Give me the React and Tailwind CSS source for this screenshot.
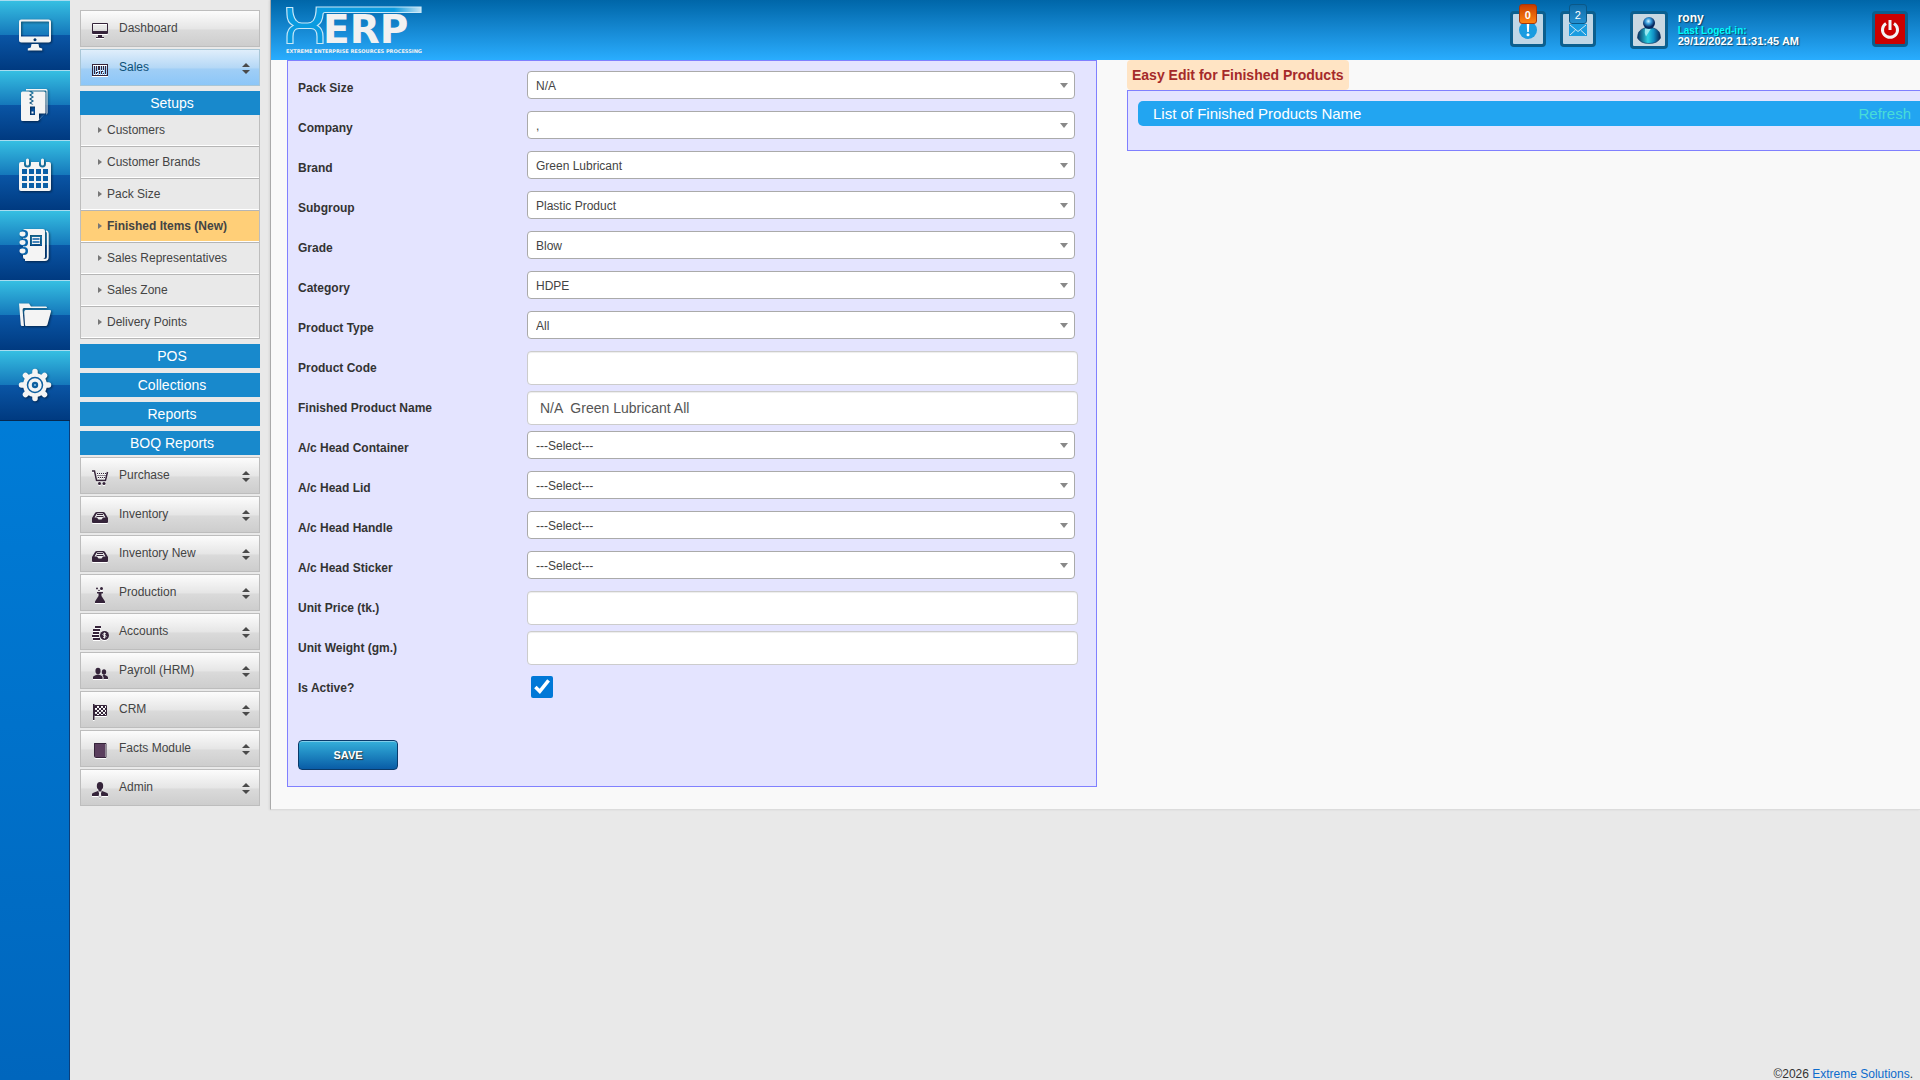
import React, { useState } from "react";

/* ---------- large white icons of the left rail ---------- */

function MonitorIcon() {
  return (
    <svg viewBox="0 0 34 34" className="size-[34px] drop-shadow-[1px_1px_1px_rgba(0,0,0,0.5)]" fill="#f4f4f4">
      <path fillRule="evenodd" d="M3.500 1.500h27a2.500 2.500 0 0 1 2.500 2.500v18a2.500 2.500 0 0 1-2.500 2.500h-27a2.500 2.500 0 0 1-2.500-2.500v-18a2.500 2.500 0 0 1 2.500-2.500zM3 4v14.500h28V4a.5.5 0 0 0-.5-.5h-27a.5.500 0 0 0-.5.500zM17 20.300a1.500 1.500 0 1 0 .01 0z" />
      <path d="M13.500 26h7l.7 3.500 3 1v2h-14.400v-2l3-1z" />
    </svg>
  );
}

function ArchiveIcon() {
  return (
    <svg viewBox="0 0 34 34" className="size-[34px] drop-shadow-[1px_1px_1px_rgba(0,0,0,0.5)]" fill="#f4f4f4">
      <path d="M8 1h20q1.500 0 1.500 1.500V25l-1 2V3.500q0-1-1-1H8z" />
      <path
        fillRule="evenodd"
        d="M5.500 3.500h5.500l3 1.500-3 2 3 2-3 2 3 2-3 2 3 1.500h1.500l-2.500-1.500 3-2-3-2 3-2-3-2 3-2-2-1.500h12q1.500 0 1.500 1.500V25l-7.500 8h-15.500q-1.500 0-1.500-1.500v-26.500q0-1.500 1.500-1.500zM12 18.500v8.500h5v-8.500zM13.500 23.500h2v2h-2zM21 31.500v-6h6z"
      />
    </svg>
  );
}

function CalendarIcon() {
  return (
    <svg viewBox="0 0 34 34" className="size-[34px] drop-shadow-[1px_1px_1px_rgba(0,0,0,0.5)]">
      <path fill="#f4f4f4" d="M3 4h3v2a3.500 3.500 0 0 0 7 0V4h8v2a3.500 3.500 0 0 0 7 0V4h3q2 0 2 2v25q0 2-2 2H3q-2 0-2-2V6q0-2 2-2z" />
      <path stroke="#f4f4f4" strokeWidth="3" strokeLinecap="round" d="M9.500 2v4M24.500 2v4" />
      <g fill="#0b5fa6">
        {[11, 18, 25].map((y) =>
          [4, 11, 18, 25].map((x) => <rect key={`${x}-${y}`} x={x} y={y} width="5" height="5" />)
        )}
      </g>
    </svg>
  );
}

function NotebookIcon() {
  return (
    <svg viewBox="0 0 34 34" className="size-[34px] drop-shadow-[1px_1px_1px_rgba(0,0,0,0.5)]">
      <path
        fill="#f4f4f4"
        fillRule="evenodd"
        d="M7 1h18q2 0 2 2v26q0 2-2 2H7q-2 0-2-2V3q0-2 2-2zM12 7v11h12V7zM14 9h8v7h-8z"
      />
      <path fill="none" stroke="#f4f4f4" strokeWidth="1.800" d="M28 3q1.800.5 1.800 2.500v23.500q0 3-3 3H7" />
      <path stroke="#0b5fa6" strokeWidth="1.500" d="M14.500 11h7M14.500 14h7" />
      {[6, 14.5, 23].map((y) => (
        <g key={y}>
          <circle cx="6" cy={y} r="4" fill="#0b65ab" />
          <ellipse cx="4.500" cy={y} rx="3" ry="2.400" fill="#f4f4f4" />
        </g>
      ))}
    </svg>
  );
}

function FolderIcon() {
  return (
    <svg viewBox="0 0 34 34" className="size-[34px] drop-shadow-[1px_1px_1px_rgba(0,0,0,0.5)]" fill="#f4f4f4">
      <path d="M1 5.500h10l2 3h15q1 0 1 1.500H6q-1.500 0-1.400 2L6 28H4q-1 0-1.200-1z" />
      <path d="M7.500 12H32q1.500 0 1 1.500l-3.500 13q-.5 1.500-2 1.500H8q-1 0-1-1l-.8-13q0-1.500 1.300-2z" />
    </svg>
  );
}

function GearIcon() {
  return (
    <svg viewBox="0 0 34 34" className="size-[34px] drop-shadow-[1px_1px_1px_rgba(0,0,0,0.5)]">
      <g stroke="#f4f4f4" strokeWidth="5.500" strokeLinecap="round">
        <path d="M17 3.500v27M3.500 17h27M7.500 7.500l19 19M26.500 7.500l-19 19" />
      </g>
      <circle cx="17" cy="17" r="12" fill="#f4f4f4" />
      <circle cx="17" cy="17" r="7.500" fill="none" stroke="#0e5f9f" strokeWidth="1.500" />
      <circle cx="17" cy="17" r="3.200" fill="#0e5f9f" />
      <circle cx="17" cy="17" r="1" fill="#8fc0e4" />
    </svg>
  );
}

/* ---------- small dark icons of the module menu ---------- */

const menuIcons = {
  dashboard: (
    <path fillRule="evenodd" d="M1 0h14q1 0 1 1v9q0 1-1 1H1q-1 0-1-1V1q0-1 1-1zM1 1v7h14V1zM6 12h4v2h2v1H4v-1h2z" />
  ),
  sales: (
    <>
      <path fillRule="evenodd" d="M0 2h16v12H0zM1 3v10h14V3z" />
      <path d="M2 4h1v8H2zM4 4h1v5H4zM6 4h2v4H6zM9 4h1v4H9zM11 4h1v4h-1zM13 4h1v8h-1zM4 10h2v1H5v1H4zM7 9h1v3H7zM9 9h2v1h-1v2H9zM11 11h1v1h-1z" />
    </>
  ),
  purchase: (
    <>
      <path fill="none" stroke="#35243a" strokeWidth="1.500" d="M0 1h2.500l2 9.500h9L15.500 2" />
      <path fill="none" stroke="#35243a" strokeWidth="1" strokeDasharray="1 1" d="M5 3.500h9M5.500 5.500h8.500M6 7.500h7.500" />
      <circle cx="7.500" cy="13.500" r="1.500" />
      <circle cx="12" cy="13.500" r="1.500" />
    </>
  ),
  inventory: (
    <>
      <path d="M0 9l3-5q.5-1 2-1h6q1.500 0 2 1l3 5v4q0 1-1 1H1q-1 0-1-1z" />
      <path fill="#eee" d="M2.500 8.500L4.500 5q.4-.8 1.300-.8h4.400q.9 0 1.300.8l2 3.500H11L9.500 10.500h-3L5 8.500z" />
      <path stroke="#35243a" d="M5 5.500h6M4.500 7.500h7" />
    </>
  ),
  production: (
    <>
      <path d="M5 5h6v1.500H9.500V9L13 14.500V16H3v-1.500L6.500 9V6.500H5z" />
      <circle cx="9.500" cy="1.500" r="1.500" />
      <circle cx="5" cy="1.500" r="1" />
      <circle cx="7" cy="3.500" r=".8" />
    </>
  ),
  accounts: (
    <>
      <path d="M3 0h6v2H3zM1 3h7v2H1zM1 6h6v2H1zM0 9h7v2H0zM1 12h7v2H1z" />
      <circle cx="12.500" cy="9.500" r="4.500" />
      <path fill="none" stroke="#eee" strokeWidth="1" d="M14 7.800q-3-1-3 .5t1.500 1.200 1.500 1-3 .8M12.500 6.500v6" />
    </>
  ),
  payroll: (
    <>
      <ellipse cx="6" cy="6" rx="2.600" ry="3.200" />
      <path d="M1 14v-2q0-1 2-1.500L5 9.500h2l2 1q1.500.5 1.500 1.500v2z" />
      <ellipse cx="12" cy="7" rx="2.200" ry="2.800" />
      <path d="M11.500 14v-2l-1-1.500 1-.5h1.500l2 1q1 .5 1 1.500V14z" />
    </>
  ),
  crm: (
    <>
      <path d="M1 0h1.500v16H1z" />
      <path fill="none" stroke="#35243a" d="M2.500 1.500h12v10h-12z" />
      {[2, 4, 6, 8, 10].map((y, i) =>
        [3, 7, 11].map((x) => <rect key={`${x}-${y}`} x={x + (i % 2) * 2} y={y} width="2" height="2" />)
      )}
    </>
  ),
  facts: (
    <>
      <path fill="#5b3f5e" d="M2 0h11v14H3q-1 0-1-1z" />
      <path fill="none" stroke="#35243a" d="M2.500 13V.5h11.500v14H3.500q-1 0-1-1" />
    </>
  ),
  admin: (
    <>
      <ellipse cx="8" cy="4" rx="3.200" ry="4" />
      <path d="M6.500 7h3v2.500h-3zM0 14v-2q0-1 2-1.500l4-1.500 2 4 2-4 4 1.500q2 .5 2 1.500v2H9.500L8 16l-1.500-2z" />
      <path fill="#eee" d="M7.300 10h1.400L9.300 14 8 15.500 6.700 14z" />
    </>
  ),
};

function MenuIcon({ name }) {
  return (
    <svg viewBox="0 0 16 16" className="mt-1 size-4 shrink-0 overflow-visible drop-shadow-[0_1px_0_#fff]" fill="#35243a">
      {menuIcons[name]}
    </svg>
  );
}

function SortArrows() {
  return (
    <svg viewBox="0 0 8 11" className="ml-auto mt-[2px] h-[11px] w-2" fill="#4a4a4a">
      <path d="M4 0l4 4H0zM4 11l4-4H0z" />
    </svg>
  );
}

/* ---------- data ---------- */

const railItems = [
  { label: "Desktop", Icon: MonitorIcon },
  { label: "Archive", Icon: ArchiveIcon },
  { label: "Calendar", Icon: CalendarIcon },
  { label: "Notebook", Icon: NotebookIcon },
  { label: "Files", Icon: FolderIcon },
  { label: "Settings", Icon: GearIcon },
];

const setupLinks = [
  "Customers",
  "Customer Brands",
  "Pack Size",
  "Finished Items (New)",
  "Sales Representatives",
  "Sales Zone",
  "Delivery Points",
];

const salesSections = ["POS", "Collections", "Reports", "BOQ Reports"];

const modules = [
  { label: "Purchase", icon: "purchase" },
  { label: "Inventory", icon: "inventory" },
  { label: "Inventory New", icon: "inventory" },
  { label: "Production", icon: "production" },
  { label: "Accounts", icon: "accounts" },
  { label: "Payroll (HRM)", icon: "payroll" },
  { label: "CRM", icon: "crm" },
  { label: "Facts Module", icon: "facts" },
  { label: "Admin", icon: "admin" },
];

const fields = [
  { id: "packSize", label: "Pack Size", type: "select", value: "N/A" },
  { id: "company", label: "Company", type: "select", value: "," },
  { id: "brand", label: "Brand", type: "select", value: "Green Lubricant" },
  { id: "subgroup", label: "Subgroup", type: "select", value: "Plastic Product" },
  { id: "grade", label: "Grade", type: "select", value: "Blow" },
  { id: "category", label: "Category", type: "select", value: "HDPE" },
  { id: "productType", label: "Product Type", type: "select", value: "All" },
  { id: "productCode", label: "Product Code", type: "text", value: "" },
  { id: "productName", label: "Finished Product Name", type: "text", value: "N/A  Green Lubricant All" },
  { id: "headContainer", label: "A/c Head Container", type: "select", value: "---Select---" },
  { id: "headLid", label: "A/c Head Lid", type: "select", value: "---Select---" },
  { id: "headHandle", label: "A/c Head Handle", type: "select", value: "---Select---" },
  { id: "headSticker", label: "A/c Head Sticker", type: "select", value: "---Select---" },
  { id: "unitPrice", label: "Unit Price (tk.)", type: "text", value: "" },
  { id: "unitWeight", label: "Unit Weight (gm.)", type: "text", value: "" },
  { id: "isActive", label: "Is Active?", type: "checkbox", value: true },
];

/* ---------- sidebar ---------- */

function IconRail() {
  return (
    <nav className="w-[70px] shrink-0 border-r border-[#0a3f7c] bg-linear-to-b from-[#008be8] to-[#0066bd]">
      <div className="-mr-px border-b border-[#06284f]">
        {railItems.map(({ label, Icon }) => (
          <button
            key={label}
            type="button"
            aria-label={label}
            className="flex h-[70px] w-full items-center justify-center border-t border-[#a9dcf0] bg-[linear-gradient(to_bottom,#36bfe2_0%,#1578bb_49%,#0a55a5_50%,#003a80_100%)] pb-[2px]"
          >
            <Icon />
          </button>
        ))}
      </div>
    </nav>
  );
}

function ModuleButton({ label, icon, active, arrows = true }) {
  return (
    <button
      type="button"
      className={`flex h-[37px] w-full items-center border pl-[11px] pr-[9px] text-xs ${
        active
          ? "border-[#a9c6d6] bg-[linear-gradient(to_bottom,#e0eefb_0%,#b5d8f6_50%,#a0cef6_55%,#8cc6f8_100%)] text-[#0d5077]"
          : "border-[#bdbdbd] bg-[linear-gradient(to_bottom,#fcfcfc_0%,#e6e6e6_50%,#dadada_55%,#cdcdcd_100%)] text-[#444]"
      }`}
    >
      <MenuIcon name={icon} />
      <span className="-mt-px ml-[11px]">{label}</span>
      {arrows && <SortArrows />}
    </button>
  );
}

function SectionTitle({ children }) {
  return (
    <button type="button" className="block h-6 w-full bg-[#1889cc] pl-1 text-center text-sm leading-6 text-white">
      {children}
    </button>
  );
}

function Sidebar() {
  return (
    <aside className="w-[200px] shrink-0 px-[10px] pt-[10px]">
      <div className="flex flex-col gap-[2px]">
        <ModuleButton label="Dashboard" icon="dashboard" arrows={false} />
        <ModuleButton label="Sales" icon="sales" active />
      </div>
      <div className="mb-[2px] mt-[5px] flex flex-col gap-[5px]">
        <div>
          <SectionTitle>Setups</SectionTitle>
          <ul className="border-x border-[#bdbdbd]">
            {setupLinks.map((link) => (
              <li key={link} className="border-b border-[#b5b5b5]">
                <a
                  href="#"
                  className={`flex h-[31px] items-center gap-[5px] border-b border-white pl-[17px] text-xs text-[#444] ${
                    link === "Finished Items (New)" ? "bg-[#ffcf78] font-bold" : "bg-[#e9e9e9]"
                  }`}
                >
                  <svg viewBox="0 0 4 6" className="h-[6px] w-1" fill="#777">
                    <path d="M0 0l4 3-4 3z" />
                  </svg>
                  {link}
                </a>
              </li>
            ))}
          </ul>
        </div>
        {salesSections.map((s) => (
          <SectionTitle key={s}>{s}</SectionTitle>
        ))}
      </div>
      <div className="flex flex-col gap-[2px]">
        {modules.map((m) => (
          <ModuleButton key={m.label} {...m} />
        ))}
      </div>
    </aside>
  );
}

/* ---------- header ---------- */

function Logo() {
  return (
    <svg viewBox="0 0 144 60" className="h-[60px] w-36" role="img" aria-label="XERP">
      <defs>
        <linearGradient id="tail" x1="0" x2="1">
          <stop offset="0.800" stopColor="#0a9be0" />
          <stop offset="1" stopColor="#c4e2f2" />
        </linearGradient>
      </defs>
      <path
        d="M.7 7.500h6q0 9 3.500 13 2 2.500 5.500 2.500h6q3.500 0 5.500-2.500 3-4 3-13.500H135v5.500H39q-2 0-2 2-.5 8-5.500 11 5.500 3 5.500 11v7h-6v-7q0-8-6-8h-12q-6 0-6 8v7h-6v-7q0-8 6-11-6-3-6-11z"
        fill="url(#tail)"
        stroke="#c9e8f8"
        strokeWidth="1.200"
      />
      <text x="37" y="43" fill="#f1f1f1" fontSize="39" fontWeight="700" fontFamily="DejaVu Sans, sans-serif">
        ERP
      </text>
      <text x="0" y="53" fill="#f1f1f1" fontSize="5" fontWeight="700" fontFamily="DejaVu Sans, sans-serif">
        EXTREME ENTERPRISE RESOURCES PROCESSING
      </text>
    </svg>
  );
}

function Badge({ children, className }) {
  return (
    <span
      className={`absolute -top-[10px] left-[6px] h-5 w-[18px] rounded-[3px] border text-center text-[11px] leading-[20px] text-white ${className}`}
    >
      {children}
    </span>
  );
}

function Header() {
  return (
    <header className="flex h-[60px] items-start bg-linear-to-b from-[#0066a8] to-[#29adff] pl-[15px] pr-3">
      <a href="#" className="block">
        <Logo />
      </a>
      <div className="ml-auto flex items-start pt-[11px]">
        <button
          type="button"
          aria-label="Alerts"
          className="relative mr-[14px] flex size-9 items-end justify-center rounded-[4px] border-[3px] border-[#0b5f8f] bg-[#bfd6e6] pb-[5px]"
        >
          <svg viewBox="0 0 18 18" className="size-[18px]">
            <circle cx="9" cy="9" r="9" fill="#1a9ce0" />
            <path fill="#fff" d="M7.700 2.500h2.600l-.5 8.500H8.200z" />
            <circle cx="9" cy="13.800" r="1.500" fill="#fff" />
          </svg>
          <Badge className="border-[#a83808] bg-linear-to-b from-[#c93c00] to-[#ff8412] font-bold">0</Badge>
        </button>
        <button
          type="button"
          aria-label="Messages"
          className="relative mr-[34px] flex size-9 items-end justify-center rounded-[4px] border-[3px] border-[#0b5f8f] bg-[#bfd6e6] pb-2"
        >
          <svg viewBox="0 0 18 12" className="h-3 w-[18px]">
            <path fill="#1a9ce0" d="M0 0h18v12H0z" />
            <path fill="none" stroke="#cfe6f4" d="M1 1l8 6.500L17 1M1 11l5.500-5M17 11l-5.500-5" />
          </svg>
          <Badge className="border-[#0a5888] bg-linear-to-b from-[#0d6ba8] to-[#2590d0]">2</Badge>
        </button>
        <div className="flex size-[38px] items-center justify-center rounded-[4px] border-[3px] border-[#0b5f8f] bg-[#c9d8e2]">
          <svg viewBox="0 0 30 30" className="size-[30px]">
            <defs>
              <linearGradient id="body" x1="0" x2="1">
                <stop offset="0" stopColor="#08305f" />
                <stop offset="0.450" stopColor="#2bd0e2" />
                <stop offset="0.700" stopColor="#108fc4" />
                <stop offset="1" stopColor="#072050" />
              </linearGradient>
              <radialGradient id="head" cx="0.450" cy="0.350">
                <stop offset="0" stopColor="#d8f4ff" />
                <stop offset="0.450" stopColor="#3a9fe0" />
                <stop offset="1" stopColor="#08285e" />
              </radialGradient>
            </defs>
            <path fill="url(#body)" stroke="#0a2a5a" strokeWidth=".6" d="M3.500 23q0-8 7-10h9q7 2 7 10-3 5.500-11.500 5.500T3.500 23z" />
            <path fill="#b5f2f8" opacity=".8" d="M11 13.500h6l-5 8q-2-4-1-8z" />
            <circle cx="15" cy="8" r="6" fill="url(#head)" />
          </svg>
        </div>
        <div className="ml-[10px] mr-[73px] font-bold text-white text-shadow-[1px_1px_1px_rgba(0,0,0,0.5)]">
          <p className="text-xs leading-[14px]">rony</p>
          <p className="text-[10px] leading-[11px] text-[#00fcfc]">Last Loged-in:</p>
          <p className="text-[11px] leading-[11px]">29/12/2022 11:31:45 AM</p>
        </div>
        <button
          type="button"
          aria-label="Log out"
          className="flex size-9 items-center justify-center rounded-[4px] border-[3px] border-[#0b5f8f] bg-[#cc0000]"
        >
          <svg viewBox="0 0 20 20" className="size-5" fill="none" stroke="#f4f4f4" strokeWidth="3">
            <path d="M6 4.500a7.500 7.500 0 1 0 8 0M10 1v10" />
          </svg>
        </button>
      </div>
    </header>
  );
}

/* ---------- form ---------- */

function Field({ field }) {
  const { id, label, type, value } = field;
  const [current, setCurrent] = useState(value);

  return (
    <div className="flex h-10 items-start">
      <label htmlFor={id} className="w-[229px] shrink-0 text-xs font-bold leading-[34px] text-[#333]">
        {label}
      </label>

      {type === "select" && (
        <div className="relative mr-[3px] flex-1">
          <select
            id={id}
            value={current}
            onChange={(e) => setCurrent(e.target.value)}
            className="block h-7 w-full appearance-none rounded-[4px] border border-[#aaa] bg-white px-2 pt-[2px] text-xs text-[#444]"
          >
            <option value={value}>{value}</option>
          </select>
          <svg
            viewBox="0 0 8 5"
            className="pointer-events-none absolute right-[7px] top-3 h-[5px] w-2"
            fill="#888"
          >
            <path d="M0 0h8L4 5z" />
          </svg>
        </div>
      )}

      {type === "text" && (
        <input
          id={id}
          type="text"
          value={current}
          onChange={(e) => setCurrent(e.target.value)}
          className="h-[34px] min-w-0 flex-1 rounded-[4px] border border-[#ccc] bg-white px-3 text-sm text-[#555] shadow-[inset_0_1px_1px_rgba(0,0,0,0.075)]"
        />
      )}

      {type === "checkbox" && (
        <input
          id={id}
          type="checkbox"
          checked={current}
          onChange={(e) => setCurrent(e.target.checked)}
          className="ml-1 mt-[5px] size-[22px] accent-[#0078d7]"
        />
      )}
    </div>
  );
}

function ProductForm() {
  return (
    <form
      onSubmit={(e) => e.preventDefault()}
      className="border border-[#8080ff] bg-[#e4e4ff] pb-4 pl-[10px] pr-[18px] pt-[10px]"
    >
      {fields.map((f) => (
        <Field key={f.id} field={f} />
      ))}
      <button
        type="submit"
        className="mt-[29px] block h-[30px] w-[100px] rounded-[4px] border border-[#0a3a6a] bg-linear-to-b from-[#35b0da] to-[#0a5ca6] text-[11px] font-bold text-white shadow-[inset_0_1px_0_#7fcdea] text-shadow-[1px_1px_1px_#333]"
      >
        SAVE
      </button>
    </form>
  );
}

function EasyEdit() {
  return (
    <section>
      <h2 className="inline-block h-[30px] rounded-[4px] bg-[#ffe4c4] px-[5px] text-sm font-bold leading-[30px] text-[#a52a2a]">
        Easy Edit for Finished Products
      </h2>
      <div className="border-y border-l border-[#8080ff] bg-[#e4e4ff] pb-6 pl-[10px] pt-[10px]">
        <div className="flex h-[25px] items-center justify-between rounded-l-[5px] bg-[#22a5f1] pl-[15px] pr-[9px] pt-[2px] text-[15px] text-white">
          <span>List of Finished Products Name</span>
          <a href="#" className="text-[#48dcd8]">
            Refresh
          </a>
        </div>
      </div>
    </section>
  );
}

export default function App() {
  return (
    <div className="flex min-h-screen bg-[#e9e9e9] font-['Liberation_Sans',Arial,sans-serif] text-[#333]">
      <IconRail />
      <Sidebar />
      <div className="flex min-w-0 flex-1 flex-col">
        <div className="border-b border-l border-b-[#dcdcdc] border-l-[#aaa] bg-[#f9f9f9] shadow-[-1px_0_2px_rgba(0,0,0,0.08)]">
          <Header />
          <main className="grid grid-cols-[810fr_793fr] items-start gap-[30px] pb-[22px] pl-4">
            <ProductForm />
            <EasyEdit />
          </main>
        </div>
        <footer className="mt-auto pr-[7px] text-right text-xs leading-3">
          ©2026{" "}
          <a href="#" className="text-[#0d6ccc]">
            Extreme Solutions
          </a>
          .
        </footer>
      </div>
    </div>
  );
}
